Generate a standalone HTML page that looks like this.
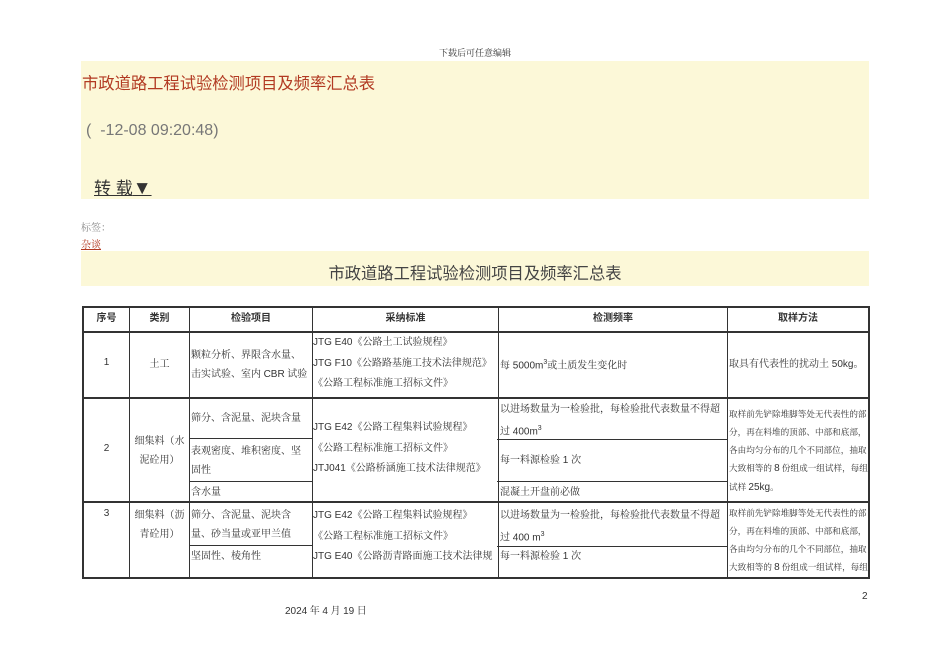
<!DOCTYPE html>
<html><head><meta charset="utf-8"><style>
*{margin:0;padding:0;box-sizing:border-box}
body{width:950px;height:672px;background:#fff;position:relative;overflow:hidden;font-family:"Liberation Sans","Noto Sans CJK SC",sans-serif;color:#222}
.a{position:absolute;white-space:nowrap}
.h{position:absolute;background:#333;height:1px}
.v{position:absolute;background:#333;width:1px}
.t{position:absolute;font-size:10px;line-height:18.5px;color:#333;white-space:nowrap}
.s{font-family:"Noto Serif CJK SC","Liberation Serif",serif}
.c{text-align:center}
.m{font-size:8.6px;line-height:18px}
.m b{font-weight:normal;font-size:10px;font-family:"Liberation Sans",sans-serif}
</style></head><body>
<div class="a s" style="left:0;width:950px;text-align:center;top:46px;font-size:9px;color:#333">下载后可任意编辑</div>
<div class="a" style="left:81px;top:61px;width:788px;height:138px;background:#fcf8d8"></div>
<div class="a" style="left:82px;top:70px;font-size:16.3px;color:#b23a22">市政道路工程试验检测项目及频率汇总表</div>
<div class="a" style="left:86px;top:122px;font-size:16px;color:#777">( &nbsp;-12-08 09:20:48)</div>
<div class="a" style="left:94px;top:174px;font-size:17px;color:#333;text-decoration:underline">转 载<span style="font-size:19px">▼</span></div>
<div class="a s" style="left:81px;top:219px;font-size:10px;color:#888">标签：</div>
<div class="a s" style="left:81px;top:236px;font-size:10px;color:#b23a22;text-decoration:underline">杂谈</div>
<div class="a" style="left:81px;top:251px;width:788px;height:35px;background:#fcf8d8"></div>
<div class="a" style="left:81px;top:260px;width:788px;text-align:center;font-size:16.3px;color:#444">市政道路工程试验检测项目及频率汇总表</div>

<div class="h" style="left:82px;top:306px;width:788px;height:2px"></div>
<div class="h" style="left:82px;top:331px;width:788px;height:2px"></div>
<div class="h" style="left:82px;top:397px;width:788px;height:2px"></div>
<div class="h" style="left:82px;top:501px;width:788px;height:2px"></div>
<div class="h" style="left:82px;top:577px;width:788px;height:2px"></div>
<div class="h" style="left:189px;top:438px;width:123px"></div>
<div class="h" style="left:189px;top:481px;width:123px"></div>
<div class="h" style="left:497px;top:439px;width:231px"></div>
<div class="h" style="left:497px;top:481px;width:231px"></div>
<div class="h" style="left:189px;top:545px;width:123px"></div>
<div class="h" style="left:497px;top:546px;width:231px"></div>
<div class="v" style="left:82px;top:306px;height:273px;width:2px"></div>
<div class="v" style="left:129px;top:306px;height:273px"></div>
<div class="v" style="left:189px;top:306px;height:273px"></div>
<div class="v" style="left:312px;top:306px;height:273px"></div>
<div class="v" style="left:498px;top:306px;height:273px"></div>
<div class="v" style="left:727px;top:306px;height:273px"></div>
<div class="v" style="left:868px;top:306px;height:273px;width:2px"></div>

<div class="t c" style="left:84px;width:45px;top:310px;font-weight:bold">序号</div>
<div class="t c" style="left:130px;width:59px;top:310px;font-weight:bold">类别</div>
<div class="t c" style="left:190px;width:122px;top:310px;font-weight:bold">检验项目</div>
<div class="t c" style="left:313px;width:185px;top:310px;font-weight:bold">采纳标准</div>
<div class="t c" style="left:499px;width:228px;top:310px;font-weight:bold">检测频率</div>
<div class="t c" style="left:728px;width:140px;top:310px;font-weight:bold">取样方法</div>

<div class="t c" style="left:84px;width:45px;top:354px">1</div>
<div class="t c s" style="left:130px;width:59px;top:354px">土工</div>
<div class="t s" style="left:191px;top:345px">颗粒分析、界限含水量、<br>击实试验、室内 <span style="font-family:'Liberation Sans'">CBR</span> 试验</div>
<div class="t" style="left:313px;top:332px">JTG E40<span class="s">《公路土工试验规程》</span><br>JTG F10<span class="s">《公路路基施工技术法律规范》</span><br><span class="s">《公路工程标准施工招标文件》</span></div>
<div class="t" style="left:500px;top:354px"><span class="s">每</span> 5000m<sup style="font-size:7px">3</sup><span class="s">或土质发生变化时</span></div>
<div class="t" style="left:729px;top:354px"><span class="s">取具有代表性的扰动土</span> 50kg<span class="s">。</span></div>

<div class="t c" style="left:84px;width:45px;top:440px">2</div>
<div class="t c s" style="left:130px;width:59px;top:431px">细集料（水<br>泥砼用）</div>
<div class="t s" style="left:191px;top:408px">筛分、含泥量、泥块含量</div>
<div class="t s" style="left:191px;top:441px">表观密度、堆积密度、坚<br>固性</div>
<div class="t s" style="left:191px;top:482px">含水量</div>
<div class="t" style="left:313px;top:417px">JTG E42<span class="s">《公路工程集料试验规程》</span><br><span class="s">《公路工程标准施工招标文件》</span><br>JTJ041<span class="s">《公路桥涵施工技术法律规范》</span></div>
<div class="t" style="left:500px;top:399px"><span class="s">以进场数量为一检验批，每检验批代表数量不得超</span><br><span class="s">过</span> 400m<sup style="font-size:7px">3</sup></div>
<div class="t" style="left:500px;top:450px"><span class="s">每一料源检验</span> 1 <span class="s">次</span></div>
<div class="t s" style="left:500px;top:482px">混凝土开盘前必做</div>
<div class="t s m" style="left:729px;top:405px">取样前先铲除堆脚等处无代表性的部<br>分，再在料堆的顶部、中部和底部，<br>各由均匀分布的几个不同部位，抽取<br>大致相等的 <b>8</b> 份组成一组试样，每组<br>试样 <b>25kg</b>。</div>

<div class="t c" style="left:84px;width:45px;top:505px">3</div>
<div class="t c s" style="left:130px;width:59px;top:505px">细集料（沥<br>青砼用）</div>
<div class="t s" style="left:191px;top:505px">筛分、含泥量、泥块含<br>量、砂当量或亚甲兰值</div>
<div class="t s" style="left:191px;top:546px">坚固性、棱角性</div>
<div class="t" style="left:313px;top:505px">JTG E42<span class="s">《公路工程集料试验规程》</span><br><span class="s">《公路工程标准施工招标文件》</span><br>JTG E40<span class="s">《公路沥青路面施工技术法律规</span></div>
<div class="t" style="left:500px;top:505px"><span class="s">以进场数量为一检验批，每检验批代表数量不得超</span><br><span class="s">过</span> 400 m<sup style="font-size:7px">3</sup></div>
<div class="t" style="left:500px;top:546px"><span class="s">每一料源检验</span> 1 <span class="s">次</span></div>
<div class="t s m" style="left:729px;top:504px">取样前先铲除堆脚等处无代表性的部<br>分，再在料堆的顶部、中部和底部，<br>各由均匀分布的几个不同部位，抽取<br>大致相等的 <b>8</b> 份组成一组试样，每组</div>

<div class="a" style="left:862px;top:591px;font-size:10px;color:#333">2</div>
<div class="a s" style="left:285px;top:602px;font-size:10px;color:#333"><span style="font-family:'Liberation Sans'">2024</span> 年 <span style="font-family:'Liberation Sans'">4</span> 月 <span style="font-family:'Liberation Sans'">19</span> 日</div>
</body></html>
